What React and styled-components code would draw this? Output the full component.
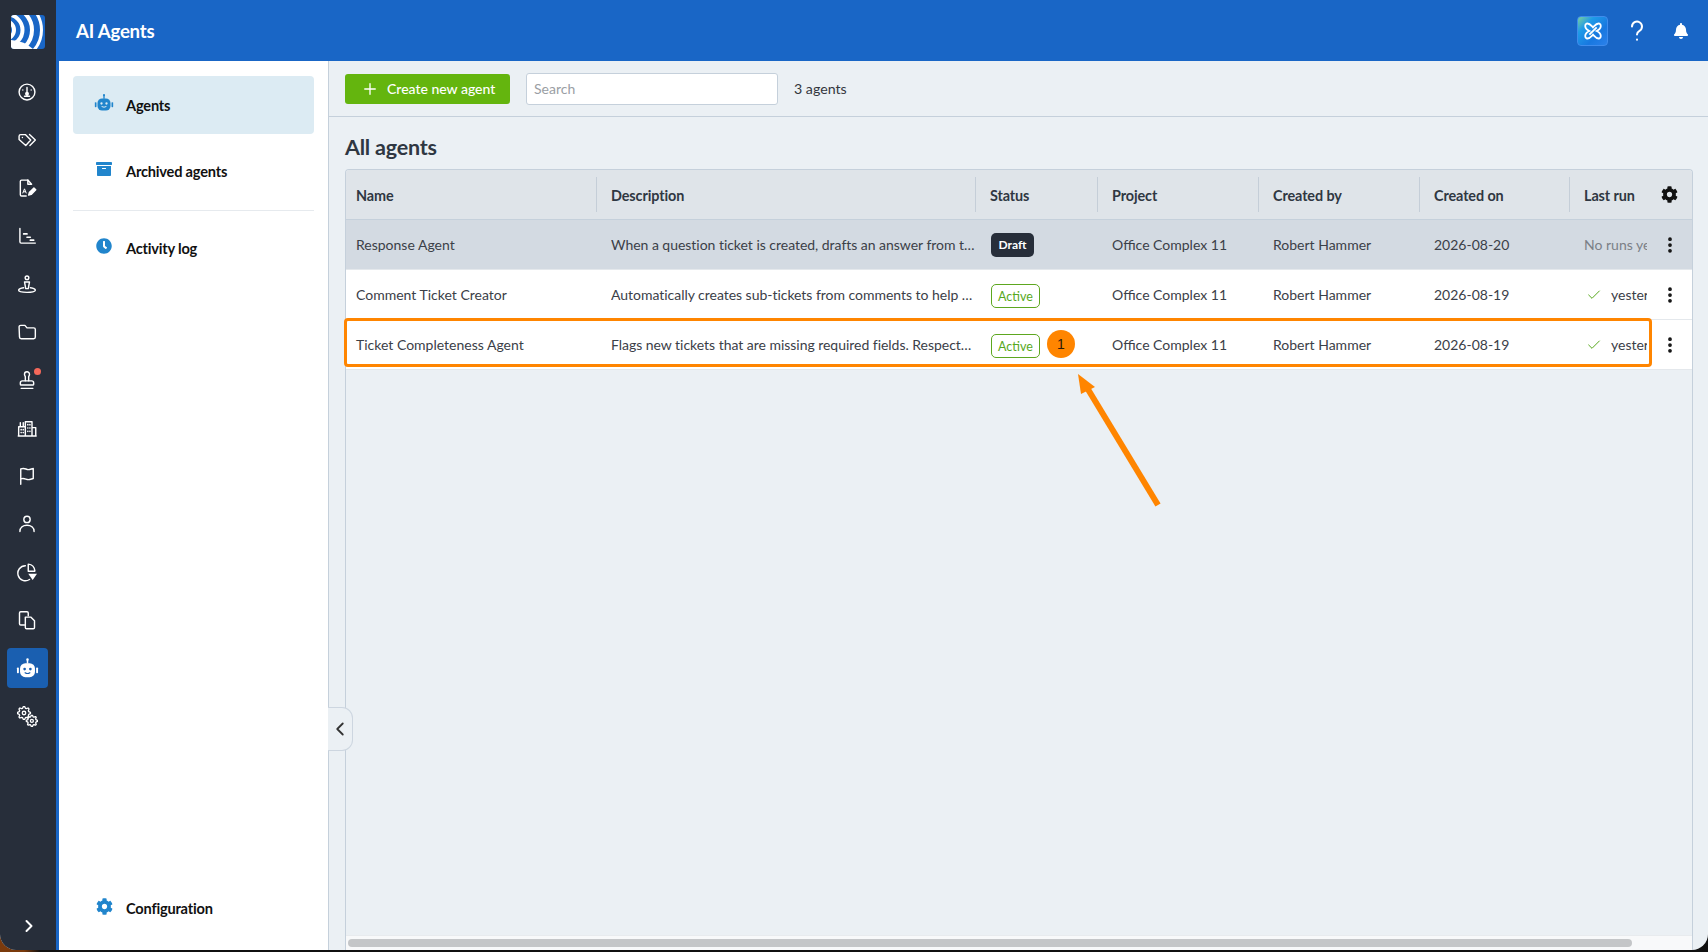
import React from "react";
import styled, { createGlobalStyle } from "styled-components";
import { Stamp, Plus, Check, EllipsisVertical, ChevronLeft, ChevronRight } from "lucide-react";
import { FaCog, FaArchive, FaClock, FaBell } from "react-icons/fa";

const GlobalStyle = createGlobalStyle`
  html, body { margin: 0; padding: 0; height: 952px; overflow: hidden; }
  body {
    background: linear-gradient(90deg, #7a3a0c 0, #7a3a0c 24px, #101010 40px);
    font-family: Lato, "Noto Sans", sans-serif;
    color: #3b4048;
  }
  * { box-sizing: border-box; }
`;

const COLUMNS = "251px 379px 122px 161px 161px 150px 77px 1fr";

const Window = styled.div`
  position: relative;
  display: flex;
  width: 1708px;
  height: 950px;
  overflow: hidden;
  border-radius: 0 0 16px 16px;
  background: #ebf0f4;
`;
const Rail = styled.aside`
  width: 56px;
  flex: none;
  display: flex;
  flex-direction: column;
  align-items: center;
  padding-right: 1px;
  background: #272e3a;
`;
const LogoBox = styled.div`
  height: 68px;
  padding-top: 15px;
`;
const RailNav = styled.nav`
  display: flex;
  flex-direction: column;
  flex: 1;
`;
const RailButton = styled.div`
  position: relative;
  width: 41px;
  height: 40px;
  margin: 4px 0;
  padding: ${(p) => (p.$bottom ? "0 0 0 3px" : "0 1px 0 0")};
  display: flex;
  align-items: center;
  justify-content: center;
  border-radius: 4px;
  color: #fff;
  background: ${(p) => (p.$active ? "#1a5fb0" : "transparent")};
  margin-top: ${(p) => (p.$bottom ? "auto" : "4px")};
`;
const Dot = styled.span`
  position: absolute;
  top: 8px;
  right: 7px;
  width: 7px;
  height: 7px;
  border-radius: 50%;
  background: #f4685a;
`;
const Content = styled.div`
  flex: 1;
  min-width: 0;
  display: flex;
  flex-direction: column;
`;
const Header = styled.header`
  height: 61px;
  flex: none;
  display: flex;
  align-items: center;
  padding: 0 5px 0 20px;
  background: #1966c6;
  color: #fff;
`;
const Title = styled.h1`
  margin: 0;
  flex: 1;
  font-size: 18.6px;
  font-weight: 700;
  letter-spacing: -0.2px;
`;
const HeaderActions = styled.div`
  display: flex;
  align-items: center;
`;
const HeaderButton = styled.div`
  width: 44px;
  height: 30px;
  display: flex;
  align-items: center;
  justify-content: center;
`;
const AiButton = styled.div`
  width: 31px;
  height: 30px;
  margin-right: 7px;
  display: flex;
  align-items: center;
  justify-content: center;
  border-radius: 4px;
  border: 1px solid #3f8cec;
  background: linear-gradient(135deg, #7ed09a 0, #1f9be8 28%, #1878e0 65%, #2b80ea 100%);
`;
const Body = styled.div`
  flex: 1;
  min-height: 0;
  display: flex;
`;
const SubNav = styled.nav`
  width: 273px;
  flex: none;
  display: flex;
  flex-direction: column;
  gap: 9px;
  padding: 15px 14px 12px;
  background: #fff;
  border-left: 3px solid #1966c6;
  border-right: 1px solid #c5d0db;
`;
const SubItem = styled.div`
  height: 58px;
  flex: none;
  display: flex;
  align-items: center;
  gap: 12px;
  padding-left: 21px;
  padding-bottom: ${(p) => (p.$active ? "0" : "2px")};
  border-radius: 4px;
  font-size: 14.6px;
  font-weight: 700;
  letter-spacing: -0.2px;
  color: #111;
  background: ${(p) => (p.$active ? "#dcebf3" : "transparent")};
  margin-top: ${(p) => (p.$bottom ? "auto" : "0")};
`;
const SubIcon = styled.span`
  width: 20px;
  display: flex;
  justify-content: center;
  margin-top: -4px;
  color: #2185cc;
`;
const Divider = styled.hr`
  width: 100%;
  margin: 0;
  border: 0;
  border-top: 1px solid #e6eaee;
`;
const Main = styled.main`
  position: relative;
  flex: 1;
  min-width: 0;
  display: flex;
  flex-direction: column;
`;
const Toolbar = styled.div`
  height: 56px;
  flex: none;
  display: flex;
  align-items: center;
  padding: 0 16px;
  border-bottom: 1px solid #c5d0db;
`;
const CreateButton = styled.button`
  width: 165px;
  height: 30px;
  display: flex;
  align-items: center;
  gap: 8px;
  padding: 0 0 0 16px;
  border: 0;
  border-radius: 3px;
  background: #64b50e;
  color: #fff;
  font: 500 14px Lato, sans-serif;
`;
const Search = styled.div`
  width: 252px;
  height: 32px;
  margin-left: 16px;
  display: flex;
  align-items: center;
  padding-left: 7px;
  border: 1px solid #c5d0db;
  border-radius: 3px;
  background: #fff;
  color: #9a9ea4;
  font-size: 14px;
`;
const Count = styled.span`
  margin-left: 16px;
  font-size: 14.2px;
  color: #33373d;
`;
const Heading = styled.h2`
  margin: 0;
  height: 52px;
  flex: none;
  padding: 17px 0 0 16px;
  font-size: 21.5px;
  line-height: 27px;
  font-weight: 700;
  letter-spacing: -0.2px;
  color: #2f3742;
`;
const Table = styled.div`
  flex: 1;
  min-height: 0;
  margin: 0 15px 0 16px;
  display: flex;
  flex-direction: column;
  border: 1px solid #c5d0db;
  border-bottom: 0;
  border-radius: 4px 4px 0 0;
  overflow: hidden;
`;
const HeadRow = styled.div`
  height: 50px;
  flex: none;
  display: grid;
  grid-template-columns: ${COLUMNS};
  align-items: center;
  background: #dfe4e9;
  border-bottom: 1px solid #c5d0db;
`;
const HeadCell = styled.div`
  height: 35px;
  display: flex;
  align-items: center;
  padding-left: ${(p) => (p.$first ? "10px" : "14px")};
  padding-top: 1px;
  border-right: 1px solid ${(p) => (p.$last ? "transparent" : "#c5ced8")};
  font-size: 14.4px;
  font-weight: 700;
  letter-spacing: -0.1px;
  color: #2f3742;
  white-space: nowrap;
`;
const GearCell = styled.div`
  display: flex;
  justify-content: center;
  padding: 0 1px 0 0;
  color: #111;
`;
const Row = styled.div`
  height: 50px;
  flex: none;
  display: grid;
  grid-template-columns: ${COLUMNS};
  align-items: center;
  background: ${(p) => (p.$selected ? "#d3dae2" : "#fff")};
  border-bottom: 1px solid #e4e8ec;
`;
const Cell = styled.div`
  display: flex;
  align-items: center;
  min-width: 0;
  padding-left: ${(p) => (p.$first ? "10px" : "14px")};
  font-size: 14px;
  color: ${(p) => (p.$muted ? "#7b8087" : "#3b4048")};
  white-space: nowrap;
  overflow: hidden;
`;
const Truncated = styled.span`
  overflow: hidden;
  text-overflow: ellipsis;
  width: 100%;
  letter-spacing: -0.03px;
`;
const RunCell = styled(Cell)`
  padding-left: 14px;
  gap: 9px;
`;
const ActionCell = styled.div`
  display: flex;
  justify-content: center;
  color: #111;
`;
const DraftBadge = styled.span`
  width: 43px;
  height: 24px;
  margin: 0 0 0 1px;
  display: inline-flex;
  align-items: center;
  justify-content: center;
  border-radius: 5px;
  background: #272e3a;
  color: #fff;
  font-size: 12px;
  font-weight: 700;
`;
const ActiveBadge = styled.span`
  width: 49px;
  height: 24px;
  margin: 2px 0 0 1px;
  display: inline-flex;
  align-items: center;
  justify-content: center;
  padding-top: 1px;
  border: 1px solid #5da71f;
  border-radius: 5px;
  background: #fff;
  color: #57a81c;
  font-size: 12.5px;
`;
const TableSpace = styled.div`
  flex: 1;
`;
const ScrollTrack = styled.div`
  height: 15px;
  flex: none;
  padding: 3px 0 0 2px;
  background: #f8f9fa;
  border-top: 1px solid #e8ebee;
`;
const ScrollThumb = styled.div`
  width: 1284px;
  height: 8px;
  border-radius: 4px;
  background: #c4c6c8;
`;
const Collapse = styled.div`
  position: absolute;
  left: -1px;
  top: 646px;
  width: 25px;
  height: 44px;
  display: flex;
  align-items: center;
  justify-content: center;
  background: #ebf0f4;
  border: 1px solid #cdd6e0;
  border-left: 0;
  border-radius: 0 11px 11px 0;
  color: #333;
`;
const Highlight = styled.div`
  position: absolute;
  left: 344px;
  top: 318px;
  width: 1308px;
  height: 49px;
  border: 3px solid #ff8500;
  border-radius: 4px;
  pointer-events: none;
`;
const Marker = styled.div`
  position: absolute;
  left: 1047px;
  top: 330px;
  width: 28px;
  height: 28px;
  display: flex;
  align-items: center;
  justify-content: center;
  border-radius: 50%;
  background: #ff8500;
  color: #2a1a08;
  font: 14px "Liberation Sans", sans-serif;
`;
const ArrowArt = styled.svg`
  position: absolute;
  left: 1070px;
  top: 366px;
  pointer-events: none;
`;

const I = ({ children, size = 20, sw = 1.7 }) => (
  <svg width={size} height={size} viewBox="0 0 24 24" fill="none" stroke="currentColor" strokeWidth={sw} strokeLinecap="round" strokeLinejoin="round">
    {children}
  </svg>
);

const Logo = () => (
  <svg width="34" height="34" viewBox="0 0 34 34" style={{ display: "block" }}>
    <defs>
      <clipPath id="logoClip"><rect width="34" height="34" rx="3" /></clipPath>
    </defs>
    <g clipPath="url(#logoClip)">
      <rect width="34" height="34" fill="#1966c6" />
      <g fill="none" stroke="#fff">
        <circle cx="0" cy="15" r="30.500" strokeWidth="3" />
        <circle cx="-2" cy="15" r="23" strokeWidth="4" />
        <circle cx="-4" cy="15" r="15.500" strokeWidth="4" />
        <circle cx="-6" cy="15" r="9" strokeWidth="4" />
      </g>
      <path d="M0 25 Q14 26 22 34 H0Z" fill="#fff" />
    </g>
  </svg>
);

const RobotIcon = ({ size = 22 }) => (
  <svg width={size} height={size} viewBox="0 0 24 24" fill="currentColor">
    <circle cx="12" cy="2.6" r="1.3" />
    <rect x="11.2" y="3" width="1.6" height="4" />
    <rect x="4.2" y="6.6" width="15.6" height="14.4" rx="5.5" />
    <rect x="1" y="11" width="2" height="6" rx="0.8" />
    <rect x="21" y="11" width="2" height="6" rx="0.8" />
    <circle cx="9" cy="12.6" r="1.4" fill="var(--robot-cut)" />
    <circle cx="15" cy="12.6" r="1.4" fill="var(--robot-cut)" />
    <path d="M9.5 16.4q2.5 1.6 5 0" fill="none" stroke="var(--robot-cut)" strokeWidth="1.2" strokeLinecap="round" />
  </svg>
);

const gearPath = (cx, cy, r, teeth = 8) => {
  const pts = [];
  for (let i = 0; i < teeth * 4; i++) {
    const a = (i / (teeth * 4)) * Math.PI * 2 - Math.PI / (teeth * 4);
    const rr = i % 4 < 2 ? r : r * 0.76;
    pts.push(`${(cx + Math.cos(a) * rr).toFixed(2)} ${(cy + Math.sin(a) * rr).toFixed(2)}`);
  }
  return `M${pts.join("L")}Z`;
};

const railIcons = [
  <I key="g"><circle cx="12" cy="12" r="9.5" /><path d="M12 12.5V6.5M7 9.5v.01M17 9.5v.01M12 12.5v4M9 17h6" /><circle cx="12" cy="14" r="1.5" fill="currentColor" /></I>,
  <I key="t"><path d="M2.5 7.5A2 2 0 0 1 4.5 5.5H10l6.5 6.5-6 6.5-8-7z" /><path d="M15 5.5l7 6.5-6.5 6.5" /><path d="M6.5 9v.01" /></I>,
  <I key="f"><path d="M13 2.5H5.5A1.5 1.5 0 0 0 4 4v16a1.5 1.5 0 0 0 1.5 1.5H11" /><path d="M13 2.5v5h4.5L13 2.5" /><path d="M7 18l2-5 2 5M8 16.5h2" strokeWidth="1.2" /><path d="M14 20.5l.8-3 5.500-5.500 2.200 2.200-5.500 5.500z" fill="currentColor" /></I>,
  <I key="c"><path d="M3.5 3v16a1.5 1.5 0 0 0 1.5 1.5h17" /><path d="M8 9.500h4M12 13.500h4M16 17h4" strokeWidth="2" /></I>,
  <I key="p"><circle cx="12" cy="4.500" r="2.200" /><path d="M9 9.500h6l-1.500 8h-3z" /><path d="M8 16.500c-3.500.5-6 1.600-6 3 0 1.600 4.500 2.500 10 2.500s10-.9 10-2.500c0-1.400-2.500-2.500-6-3" /></I>,
  <I key="d"><path d="M2.500 6A2 2 0 0 1 4.500 4h5l2.500 3h8a2 2 0 0 1 2 2v9a2 2 0 0 1-2 2h-15a2 2 0 0 1-2-2z" /></I>,
  <Stamp key="s" size={20} strokeWidth={1.7} />,
  <I key="b"><path d="M2 21.500V10.500h8v11zM10 21.500V4.500h8v17zM18 21.500v-10h4.500v10zM1.500 21.500h21.500M4 10V5.500M7.500 10V5.500" /><path d="M5 14v.01M7.500 14v.01M5 17.500v.01M7.500 17.500v.01M13 8v.01M15.500 8v.01M13 12v.01M15.500 12v.01M13 16v.01M15.500 16v.01" strokeWidth="2" /></I>,
  <I key="fl"><path d="M4.500 22V3.500c5-1.800 6 .8 9 .8 2.500 0 4-1 6-1.300v12c-2 .4-3.500 1.300-6 1.300-3 0-4.500-2.300-9-.8" /></I>,
  <I key="u"><circle cx="12" cy="6.500" r="3.800" /><path d="M3.500 21c0-4.700 3.800-7.500 8.500-7.500s8.500 2.800 8.500 7.500" /></I>,
  <I key="pie"><path d="M10 4.500a9 9 0 1 0 5 16.500" /><path d="M13.500 2.500c4.500.3 7.500 3.500 8 8.500h-8z" /><path d="M13.500 14h10.500l-5.200 7.500z" fill="currentColor" stroke="none" /></I>,
  <I key="cp"><path d="M9 18H4.500A1.500 1.500 0 0 1 3 16.500v-13A1.500 1.500 0 0 1 4.500 2H12a1.500 1.500 0 0 1 1.500 1.500V7" /><path d="M10 8.500h6.500l4.500 4.500v8a1.500 1.500 0 0 1-1.500 1.500h-8A1.500 1.500 0 0 1 10 21z" /></I>,
  <span key="r" style={{ "--robot-cut": "#1a5fb0", display: "flex" }}><RobotIcon size={23} /></span>,
  <svg key="gg" width="21" height="21" viewBox="0 0 24 24" fill="none" stroke="currentColor" strokeWidth="1.5" strokeLinejoin="round">
    <path d={gearPath(8, 8, 7.4)} /><circle cx="8" cy="8" r="2" />
    <path d={gearPath(17, 17, 6.4)} /><circle cx="17" cy="17" r="1.7" />
  </svg>,
];

const rows = [
  { name: "Response Agent", desc: "When a question ticket is created, drafts an answer from the knowledge base", draft: true, on: "2026-08-20", selected: true },
  { name: "Comment Ticket Creator", desc: "Automatically creates sub-tickets from comments to help teams follow up", on: "2026-08-19" },
  { name: "Ticket Completeness Agent", desc: "Flags new tickets that are missing required fields. Respects project rules", on: "2026-08-19" },
];

const heads = ["Name", "Description", "Status", "Project", "Created by", "Created on"];

export default function App() {
  return (
    <>
      <GlobalStyle />
      <Window>
        <Rail>
          <LogoBox><Logo /></LogoBox>
          <RailNav>
            {railIcons.map((icon, i) => (
              <RailButton key={i} $active={i === 12}>
                {icon}
                {i === 6 && <Dot />}
              </RailButton>
            ))}
            <RailButton $bottom><ChevronRight size={20} strokeWidth={2.4} /></RailButton>
          </RailNav>
        </Rail>
        <Content>
          <Header>
            <Title>AI Agents</Title>
            <HeaderActions>
              <AiButton>
                <svg width="22" height="22" viewBox="0 0 24 24" fill="none" stroke="#fff" strokeWidth="2">
                  <path d="M5 4c3-1 5 2 7 4 2-2 4-5 7-4 2 1 2 4 0 6-1 1-2 1.500-3 2 1 .5 2 1 3 2 2 2 2 5 0 6-3 1-5-2-7-4-2 2-4 5-7 4-2-1-2-4 0-6 1-1 2-1.500 3-2-1-.5-2-1-3-2-2-2-2-5 0-6z" />
                  <path d="M8 16l8-8" />
                </svg>
              </AiButton>
              <HeaderButton>
                <I size={24} sw={2}><path d="M7 7.500a5 5 0 1 1 7.500 4.400c-1.600.9-2.500 1.800-2.500 3.600" /><path d="M12 20.500v.3" /></I>
              </HeaderButton>
              <HeaderButton><FaBell size={16} /></HeaderButton>
            </HeaderActions>
          </Header>
          <Body>
            <SubNav>
              <SubItem $active>
                <SubIcon style={{ "--robot-cut": "#dcebf3" }}><RobotIcon size={22} /></SubIcon>
                Agents
              </SubItem>
              <SubItem><SubIcon><FaArchive size={16} /></SubIcon>Archived agents</SubItem>
              <Divider />
              <SubItem><SubIcon><FaClock size={16} /></SubIcon>Activity log</SubItem>
              <SubItem $bottom><SubIcon><FaCog size={17} /></SubIcon>Configuration</SubItem>
            </SubNav>
            <Main>
              <Collapse><ChevronLeft size={22} strokeWidth={2} /></Collapse>
              <Toolbar>
                <CreateButton><Plus size={18} strokeWidth={1.8} />Create new agent</CreateButton>
                <Search>Search</Search>
                <Count>3 agents</Count>
              </Toolbar>
              <Heading>All agents</Heading>
              <Table>
                <HeadRow>
                  {heads.map((h, i) => <HeadCell key={h} $first={i === 0}>{h}</HeadCell>)}
                  <HeadCell $last>Last run</HeadCell>
                  <GearCell><FaCog size={17} /></GearCell>
                </HeadRow>
                {rows.map((r) => (
                  <Row key={r.name} $selected={r.selected}>
                    <Cell $first>{r.name}</Cell>
                    <Cell><Truncated>{r.desc}</Truncated></Cell>
                    <Cell>{r.draft ? <DraftBadge>Draft</DraftBadge> : <ActiveBadge>Active</ActiveBadge>}</Cell>
                    <Cell>Office Complex 11</Cell>
                    <Cell>Robert Hammer</Cell>
                    <Cell>{r.on}</Cell>
                    {r.draft
                      ? <Cell $muted>No runs yet</Cell>
                      : <RunCell><Check size={16} color="#57a81c" strokeWidth={1.5} style={{ flex: "none", marginLeft: 2 }} />yesterday</RunCell>}
                    <ActionCell><EllipsisVertical size={20} strokeWidth={2.5} /></ActionCell>
                  </Row>
                ))}
                <TableSpace />
                <ScrollTrack><ScrollThumb /></ScrollTrack>
              </Table>
            </Main>
          </Body>
        </Content>
        <Highlight />
        <Marker>1</Marker>
        <ArrowArt width="100" height="150" viewBox="0 0 100 150" fill="#ff8500">
          <line x1="88" y1="139" x2="16" y2="20" stroke="#ff8500" strokeWidth="6" />
          <polygon points="8,8 25,21 11,28" />
        </ArrowArt>
      </Window>
    </>
  );
}
